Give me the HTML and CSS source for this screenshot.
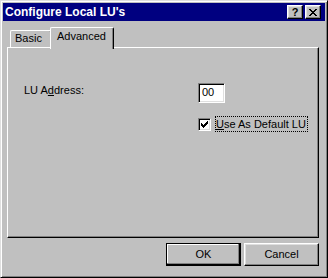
FILE: index.html
```html
<html lang="en">
	<head>
		<meta charset="UTF-8">
		<meta name="viewport" content="width=device-width, initial-scale=1.0">
		<title>Configure Local LU's</title>
		<link rel="stylesheet" href="styles.css">
	</head>
	<body>
		<div class="window">
			<div class="titlebar">
				<span class="title">Configure Local LU's</span>
				<span class="tb-btn help">?</span>
				<span class="tb-btn close">
					<svg width="8" height="7" viewBox="0 0 8 7" shape-rendering="crispEdges">
						<path d="M0 0h2v1H0zM6 0h2v1H6zM1 1h2v1H1zM5 1h2v1H5zM2 2h4v1H2zM3 3h2v1H3zM2 4h4v1H2zM1 5h2v1H1zM5 5h2v1H5zM0 6h2v1H0zM6 6h2v1H6z" fill="#000"/>
					</svg>
				</span>
			</div>

			<div class="tabs">
				<div class="tab">Basic</div>
				<div class="tab active">Advanced</div>
			</div>

			<div class="panel">
				<div class="field-row">
					<label class="field-label">LU A<u>d</u>dress:</label>
					<div class="textbox">00</div>
				</div>
				<div class="check-row">
					<span class="checkbox">
						<svg width="7" height="7" viewBox="0 0 7 7" shape-rendering="crispEdges">
							<path d="M0 2h1v3H0zM1 3h1v3H1zM2 4h1v3H2zM3 3h1v3H3zM4 2h1v3H4zM5 1h1v3H5zM6 0h1v3H6z" fill="#000"/>
						</svg>
					</span>
					<span class="check-label"><u>U</u>se As Default LU</span>
				</div>
			</div>

			<div class="buttons">
				<div class="btn default">OK</div>
				<div class="btn">Cancel</div>
			</div>
		</div>
	</body>
</html>
```

FILE: styles.css
```css
body {
    background-color: #c0c0c0;
    color: #000;
    font-family: "Liberation Sans", Arial, sans-serif;
    font-size: 11px;
    line-height: 13px;
    margin: 0;
}
.window {
    background-color: #c0c0c0;
    border: 1px solid;
    border-color: #dfdfdf #000 #000 #dfdfdf;
    box-shadow: inset 1px 1px #fff, inset -1px -1px #808080;
    box-sizing: border-box;
    height: 278px;
    padding: 2px;
    width: 328px;
}
.titlebar {
    align-items: center;
    background-color: #000080;
    color: #fff;
    display: flex;
    height: 18px;
    padding: 0 4px 0 2px;
}
.title {
    flex: 1;
    font-size: 12px;
    font-weight: bold;
}
.tb-btn {
    align-items: center;
    background-color: #c0c0c0;
    border: 1px solid;
    border-color: #fff #000 #000 #fff;
    box-shadow: inset -1px -1px #808080, inset 1px 1px #dfdfdf;
    box-sizing: border-box;
    color: #000;
    display: flex;
    height: 14px;
    justify-content: center;
    width: 16px;
}
.help {
    font-size: 11px;
    font-weight: bold;
    margin-right: 2px;
}
.close svg {
    display: block;
}

/* tabs */
.tabs {
    align-items: flex-end;
    display: flex;
    height: 20px;
    margin: 6px 0 0 4px;
    padding-left: 3px;
}
.tab {
    border: 1px solid;
    border-bottom: none;
    border-color: #fff #000 #000 #fff;
    border-radius: 2px 2px 0 0;
    box-shadow: inset -1px 0 #808080;
    box-sizing: border-box;
    height: 17px;
    padding: 1px 0 0 4px;
    width: 42px;
}
.tab.active {
    background-color: #c0c0c0;
    height: 22px;
    margin: 0 0 -2px -2px;
    padding: 2px 0 0 6px;
    position: relative;
    width: 64px;
    z-index: 1;
}
.panel {
    border: 1px solid;
    border-color: #fff #000 #000 #fff;
    box-shadow: inset -1px -1px #808080;
    box-sizing: border-box;
    height: 191px;
    margin-left: 4px;
    padding: 35px 0 0 16px;
    width: 312px;
}

/* fields */
.field-row {
    display: flex;
}
.field-label {
    padding-top: 1px;
    width: 174px;
}
.textbox, .checkbox {
    background-color: #fff;
    border: 1px solid;
    border-color: #808080 #fff #fff #808080;
    box-shadow: inset 1px 1px #000, inset -1px -1px #dfdfdf;
    box-sizing: border-box;
}
.textbox {
    height: 20px;
    padding: 2px 0 0 3px;
    width: 27px;
}
.check-row {
    align-items: center;
    display: flex;
    margin: 13px 0 0 174px;
}
.checkbox {
    align-items: center;
    display: flex;
    height: 13px;
    justify-content: center;
    width: 13px;
}
.checkbox svg {
    display: block;
}
.check-label {
    border: 1px dotted #000;
    line-height: 14px;
    margin-left: 4px;
    padding: 0 1px 0 0;
}

/* buttons */
.buttons {
    display: flex;
    gap: 3px;
    justify-content: flex-end;
    margin: 5px 6px 0 0;
}
.btn {
    align-items: center;
    border: 1px solid;
    border-color: #fff #000 #000 #fff;
    box-shadow: inset -1px -1px #808080, inset 1px 1px #dfdfdf;
    box-sizing: border-box;
    display: flex;
    height: 23px;
    justify-content: center;
    width: 75px;
}
.btn.default {
    border-color: #000;
    box-shadow: inset -1px -1px #000, inset -2px -2px #808080, inset 1px 1px #fff;
}
```
